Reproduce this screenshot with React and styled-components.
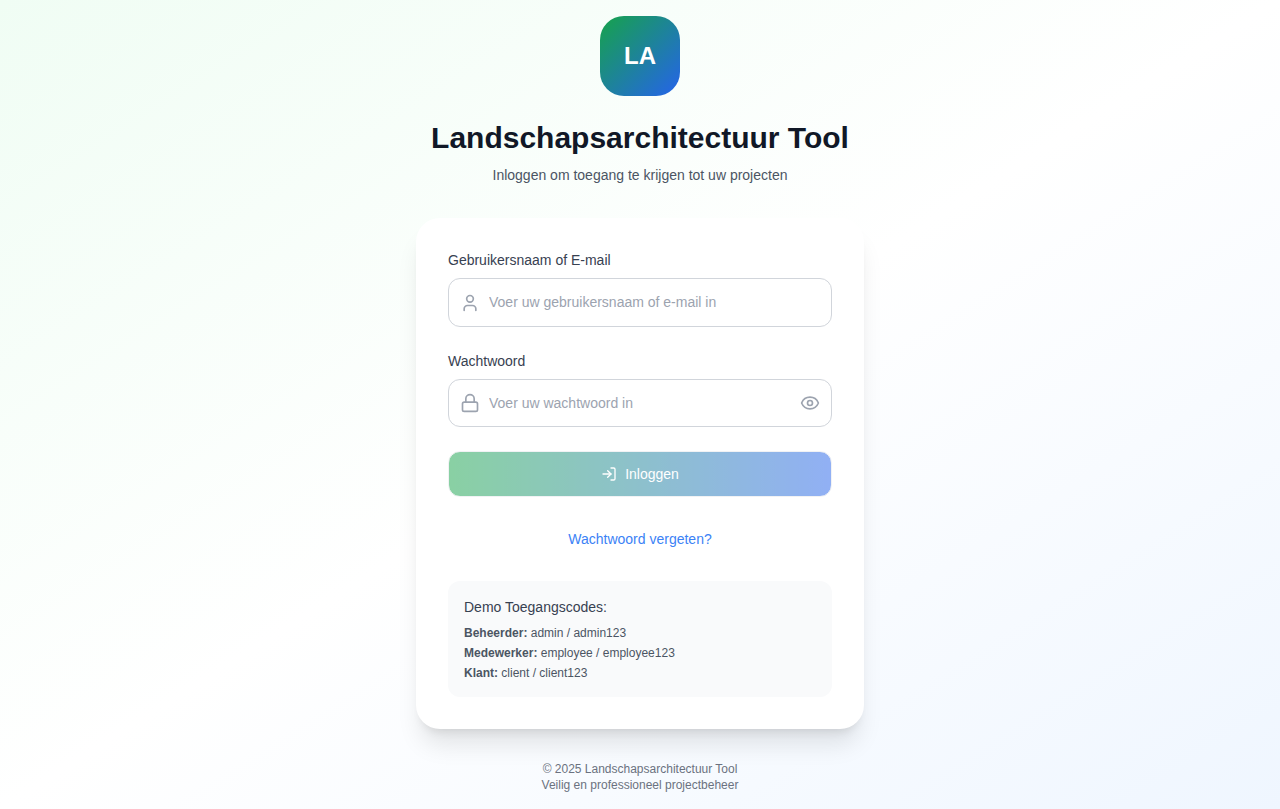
import React, { useState } from "react";
import styled, { createGlobalStyle } from "styled-components";
import { User, Lock, Eye, EyeOff, LogIn } from "lucide-react";

const GlobalStyle = createGlobalStyle`
  *, *::before, *::after { box-sizing: border-box; }
  body {
    margin: 0;
    font-family: "Liberation Sans", Arial, sans-serif;
    line-height: 1.5;
  }
  h1, p { margin: 0; }
  button, input { font: inherit; }
`;

const Page = styled.div`
  min-height: 100vh;
  display: flex;
  align-items: center;
  justify-content: center;
  padding: 16px;
  background: linear-gradient(to bottom right, #f0fdf4, #ffffff, #eff6ff);
`;

const Column = styled.main`
  width: 100%;
  max-width: 448px;
`;

const Header = styled.header`
  display: flex;
  flex-direction: column;
  align-items: center;
  margin-bottom: 32px;
`;

const Logo = styled.div`
  width: 80px;
  height: 80px;
  margin-bottom: 24px;
  border-radius: 24px;
  display: flex;
  align-items: center;
  justify-content: center;
  background: linear-gradient(to bottom right, #16a34a, #2563eb);
  color: #fff;
  font-size: 24px;
  line-height: 32px;
  font-weight: 700;
`;

const Title = styled.h1`
  margin-bottom: 8px;
  color: #111827;
  font-size: 30px;
  line-height: 36px;
  font-weight: 700;
  white-space: nowrap;
`;

const Subtitle = styled.p`
  color: #4b5563;
  font-size: 14px;
  line-height: 22px;
`;

const Card = styled.section`
  padding: 32px;
  border-radius: 24px;
  background: #fff;
  box-shadow: 0 20px 25px -5px rgba(0, 0, 0, 0.1), 0 8px 10px -6px rgba(0, 0, 0, 0.1);
`;

const Form = styled.form`
  display: flex;
  flex-direction: column;
  gap: 24px;
`;

const Field = styled.div`
  display: flex;
  flex-direction: column;
  gap: 8px;
`;

const Label = styled.label`
  color: #374151;
  font-size: 14px;
  line-height: 20px;
  font-weight: 500;
`;

const InputBox = styled.div`
  display: flex;
  align-items: center;
  gap: 9px;
  height: 48.5px;
  padding: 0 11px;
  border: 1px solid #d1d5db;
  border-radius: 12px;
  background: #fff;
  color: #9ca3af;

  svg { flex: none; display: block; margin-top: 0.8px; }
`;

const Input = styled.input`
  flex: 1;
  min-width: 0;
  padding: 0;
  border: 0;
  outline: 0;
  background: transparent;
  color: #111827;
  font-size: 14px;
  line-height: 20px;

  &::placeholder { color: #9ca3af; opacity: 1; }
`;

const IconButton = styled.button`
  padding: 0;
  border: 0;
  background: none;
  color: #9ca3af;
  cursor: pointer;
`;

const SubmitButton = styled.button`
  display: flex;
  align-items: center;
  justify-content: center;
  gap: 8px;
  height: 46px;
  border: 1px solid #e5e7eb;
  border-radius: 12px;
  background: linear-gradient(to right, #16a34a, #2563eb);
  color: #fff;
  font-size: 14px;
  line-height: 20px;
  font-weight: 500;

  &:disabled { opacity: 0.5; }
`;

const ForgotLink = styled.button`
  display: block;
  height: 36px;
  margin: 24px auto;
  padding: 0 12px;
  border: 0;
  background: none;
  color: #3b82f6;
  font-size: 14px;
  line-height: 20px;
  cursor: pointer;
`;

const Demo = styled.div`
  padding: 16px;
  border-radius: 12px;
  background: #f9fafb;
`;

const DemoTitle = styled.p`
  margin-bottom: 8px;
  color: #374151;
  font-size: 14px;
  line-height: 20px;
  font-weight: 500;
`;

const DemoList = styled.div`
  display: flex;
  flex-direction: column;
  gap: 4px;
  color: #4b5563;
  font-size: 12px;
  line-height: 16px;
`;

const Footer = styled.footer`
  margin-top: 32px;
  text-align: center;
  color: #6b7280;
  font-size: 12px;
  line-height: 16px;
`;

const accounts = [
  { role: "Beheerder", login: "admin / admin123" },
  { role: "Medewerker", login: "employee / employee123" },
  { role: "Klant", login: "client / client123" },
];

export default function App() {
  const [username, setUsername] = useState("");
  const [password, setPassword] = useState("");
  const [visible, setVisible] = useState(false);
  const ToggleIcon = visible ? EyeOff : Eye;

  return (
    <Page>
      <GlobalStyle />
      <Column>
        <Header>
          <Logo>LA</Logo>
          <Title>Landschapsarchitectuur Tool</Title>
          <Subtitle>Inloggen om toegang te krijgen tot uw projecten</Subtitle>
        </Header>
        <Card>
          <Form onSubmit={(e) => e.preventDefault()}>
            <Field>
              <Label htmlFor="username">Gebruikersnaam of E-mail</Label>
              <InputBox>
                <User size={20} />
                <Input
                  id="username"
                  placeholder="Voer uw gebruikersnaam of e-mail in"
                  value={username}
                  onChange={(e) => setUsername(e.target.value)}
                />
              </InputBox>
            </Field>
            <Field>
              <Label htmlFor="password">Wachtwoord</Label>
              <InputBox>
                <Lock size={20} />
                <Input
                  id="password"
                  type={visible ? "text" : "password"}
                  placeholder="Voer uw wachtwoord in"
                  value={password}
                  onChange={(e) => setPassword(e.target.value)}
                />
                <IconButton type="button" onClick={() => setVisible(!visible)}>
                  <ToggleIcon size={20} />
                </IconButton>
              </InputBox>
            </Field>
            <SubmitButton type="submit" disabled={!username || !password}>
              <LogIn size={16} />
              Inloggen
            </SubmitButton>
          </Form>
          <ForgotLink type="button">Wachtwoord vergeten?</ForgotLink>
          <Demo>
            <DemoTitle>Demo Toegangscodes:</DemoTitle>
            <DemoList>
              {accounts.map(({ role, login }) => (
                <p key={role}>
                  <strong>{role}:</strong> {login}
                </p>
              ))}
            </DemoList>
          </Demo>
        </Card>
        <Footer>
          <p>© 2025 Landschapsarchitectuur Tool</p>
          <p>Veilig en professioneel projectbeheer</p>
        </Footer>
      </Column>
    </Page>
  );
}
